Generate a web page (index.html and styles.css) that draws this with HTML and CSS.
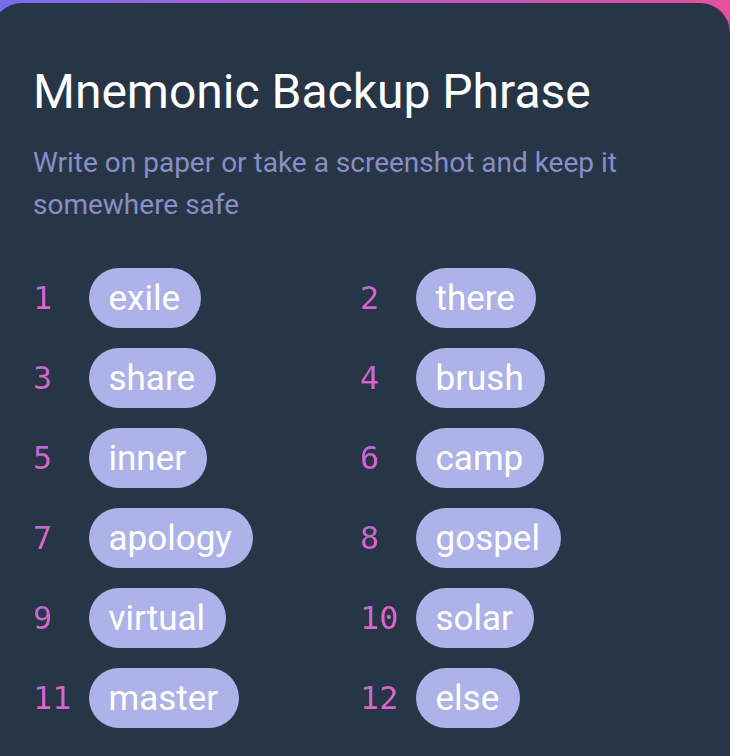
FILE: index.html
```html
<!DOCTYPE html>
<html lang="en">
<head>
<meta charset="utf-8">
<title>Mnemonic Backup Phrase</title>
<link rel="stylesheet" href="styles.css">
</head>
<body>
<main class="card">
  <h1 class="title">Mnemonic Backup Phrase</h1>
  <p class="subtitle">Write on paper or take a screenshot and keep it somewhere safe</p>
  <ol class="words">
    <li class="word"><span class="num">1</span><span class="pill">exile</span></li>
    <li class="word"><span class="num">2</span><span class="pill">there</span></li>
    <li class="word"><span class="num">3</span><span class="pill">share</span></li>
    <li class="word"><span class="num">4</span><span class="pill">brush</span></li>
    <li class="word"><span class="num">5</span><span class="pill">inner</span></li>
    <li class="word"><span class="num">6</span><span class="pill">camp</span></li>
    <li class="word"><span class="num">7</span><span class="pill">apology</span></li>
    <li class="word"><span class="num">8</span><span class="pill">gospel</span></li>
    <li class="word"><span class="num">9</span><span class="pill">virtual</span></li>
    <li class="word"><span class="num">10</span><span class="pill">solar</span></li>
    <li class="word"><span class="num">11</span><span class="pill">master</span></li>
    <li class="word"><span class="num">12</span><span class="pill">else</span></li>
  </ol>
</main>
</body>
</html>
```
FILE: styles.css
```css
html, body {
  margin: 0;
  padding: 0;
}
body {
  background: linear-gradient(90deg, #776cec 0%, #b05ed2 40%, #e64f9b 100%);
  font-family: Roboto, "Liberation Sans", sans-serif;
  overflow: hidden;
  height: 756px;
}
.card {
  margin: 3px 0 0 -8px;
  width: calc(100% + 8px);
  box-sizing: border-box;
  height: 760px;
  background: #273646;
  border-radius: 30px 30px 0 0;
  padding: 61px 43px 0 41px;
}
.title {
  margin: 0;
  font-size: 48px;
  font-weight: 400;
  color: #ffffff;
  line-height: 56px;
}
.subtitle {
  margin: 22px 0 0 0;
  font-size: 28px;
  line-height: 42px;
  color: #8b8dc6;
}
.words {
  list-style: none;
  margin: 42px 0 0 0;
  padding: 0;
  display: grid;
  grid-template-columns: 1fr 1fr;
  row-gap: 20px;
}
.word {
  display: flex;
  align-items: center;
  gap: 17px;
  height: 60px;
}
.num {
  width: 2ch;
  font-family: "DejaVu Sans Mono", monospace;
  font-size: 32px;
  background: linear-gradient(135deg, #a070f0 0%, #e062c8 45%, #d866d6 100%);
  -webkit-background-clip: text;
  background-clip: text;
  color: transparent;
}
.pill {
  display: flex;
  align-items: center;
  height: 60px;
  padding: 0 21px 0 20px;
  border-radius: 30px;
  background: #adb2e8;
  color: #ffffff;
  font-size: 35px;
}
```
